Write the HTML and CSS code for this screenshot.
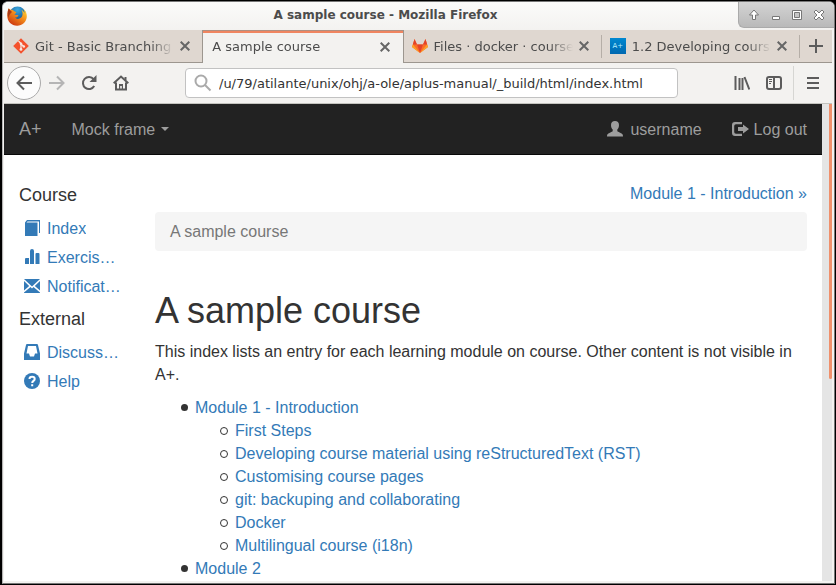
FILE: index.html
```html
<!DOCTYPE html>
<html lang="en">
<head>
<meta charset="utf-8">
<title>A sample course</title>
<link rel="stylesheet" href="styles.css">
</head>
<body>
<div class="window">
  <header class="titlebar">
    <svg class="app-icon" viewBox="0 0 20 20" aria-hidden="true">
      <defs>
        <radialGradient id="globe" cx=".5" cy=".2" r=".8"><stop offset="0" stop-color="#3ba9e0"/><stop offset="1" stop-color="#0a3a78"/></radialGradient>
        <linearGradient id="fox" x1="1" y1="0" x2=".2" y2="1"><stop offset="0" stop-color="#ffe23a"/><stop offset=".4" stop-color="#f8981d"/><stop offset="1" stop-color="#c9300f"/></linearGradient>
      </defs>
      <circle cx="10.500" cy="9" r="8.500" fill="url(#globe)"/>
      <path d="M1.500 2.500C2.500 2.500 3 3.400 3.500 3.800C5 3.500 6.200 4 7 5L9.300 6.200C9 7.400 7.800 7.600 7.300 8.600C8.500 9.400 10 8.600 11.500 9.400C10.700 11 9 11.400 8 11.600C9.500 13.600 13 13.200 14.800 10.800C16 9 15.800 6 14.500 3.800C16.500 5 17.300 6.500 17.500 7.500C17.600 5.500 17 4 16.300 2.800C19 4.800 20 8 19.800 11C19.300 16 15.300 19.700 10.200 19.700C4.500 19.700.300 15.500.300 10C.300 7 .800 4.500 1.500 2.500Z" fill="url(#fox)"/>
      <path d="M1.500 2.500C.500 6 .300 9 1.300 12C2 9 3.500 7 5 6Z" fill="#a83a18"/>
    </svg>
    <span class="window-title">A sample course - Mozilla Firefox</span>
    <div class="window-controls">
      <button type="button" aria-label="Roll up"><svg viewBox="0 0 12 12"><path class="pale" d="M6 1L10.500 6H7.500V10.500H4.500V6H1.500Z"/></svg></button>
      <button type="button" aria-label="Minimize"><svg viewBox="0 0 12 12"><path class="pale" d="M2.500 7.500H9.500V10.500H2.500Z"/></svg></button>
      <button type="button" aria-label="Maximize"><svg viewBox="0 0 12 12"><path class="pale" d="M1.500 1.500H10.500V10.500H1.500ZM3.500 3.500V8.500H8.500V3.500Z" fill-rule="evenodd"/></svg></button>
      <button type="button" aria-label="Close"><svg viewBox="0 0 12 12"><path class="pale" d="M3 1L6 4L9 1L11 3L8 6L11 9L9 11L6 8L3 11L1 9L4 6L1 3Z"/></svg></button>
    </div>
  </header>

  <nav class="tabs" aria-label="Browser tabs">
    <div class="tab">
      <svg class="favicon" viewBox="0 0 16 16" aria-hidden="true"><path d="M8 .200L15.800 8L8 15.800L.200 8Z" fill="#f4512c"/><path d="M5.500 3L8 5.500V11.500M8 6L10.800 8.500" fill="none" stroke="#f7e6e0" stroke-width="1.300"/><circle cx="8" cy="5.700" r="1.300" fill="#f7e6e0"/><circle cx="8" cy="11.400" r="1.400" fill="#f7e6e0"/><circle cx="10.800" cy="8.500" r="1.300" fill="#f7e6e0"/></svg>
      <span class="tab-label">Git - Basic Branching</span>
      <button type="button" class="tab-close" aria-label="Close tab"><svg viewBox="0 0 10 10"><path d="M.700.700L9.300 9.300M9.300.700L.700 9.300"/></svg></button>
    </div>
    <div class="tab active">
      <span class="tab-label">A sample course</span>
      <button type="button" class="tab-close" aria-label="Close tab"><svg viewBox="0 0 10 10"><path d="M.700.700L9.300 9.300M9.300.700L.700 9.300"/></svg></button>
    </div>
    <div class="tab">
      <svg class="favicon" viewBox="0 0 16 16" aria-hidden="true"><path d="M8 15L0 9L2.500 1L5 6.500H11L13.500 1L16 9Z" fill="#fc6d26"/><path d="M8 15L5 6.500H11Z" fill="#e24329"/><path d="M2.500 1L5 6.500H.900ZM13.500 1L11 6.500H15.100Z" fill="#e24329"/><path d="M.900 6.500L8 15L0 9ZM15.100 6.500L8 15L16 9Z" fill="#fca326"/></svg>
      <span class="tab-label">Files · docker · course</span>
      <button type="button" class="tab-close" aria-label="Close tab"><svg viewBox="0 0 10 10"><path d="M.700.700L9.300 9.300M9.300.700L.700 9.300"/></svg></button>
    </div>
    <div class="tab divided">
      <span class="favicon aplus">A+</span>
      <span class="tab-label">1.2 Developing course</span>
      <button type="button" class="tab-close" aria-label="Close tab"><svg viewBox="0 0 10 10"><path d="M.700.700L9.300 9.300M9.300.700L.700 9.300"/></svg></button>
    </div>
    <button type="button" class="new-tab" aria-label="New tab"><svg viewBox="0 0 14 14"><path d="M7 0V14M0 7H14"/></svg></button>
  </nav>

  <div class="toolbar">
    <button type="button" class="back" aria-label="Back"><svg viewBox="0 0 16 16"><path d="M16 8H1.500M8 1.500L1.500 8L8 14.500"/></svg></button>
    <button type="button" class="tool forward" aria-label="Forward"><svg viewBox="0 0 16 16"><path d="M0 8H14.500M8 1.500L14.500 8L8 14.500"/></svg></button>
    <button type="button" class="tool" aria-label="Reload"><svg viewBox="0 0 16 16"><path d="M13.200 11A6 6 0 1 1 12.600 4.200"/><path class="solid" d="M15.500 0V7H8.500Z"/></svg></button>
    <button type="button" class="tool" aria-label="Home"><svg viewBox="0 0 16 16"><path d="M.700 8.300L8 1.500L15.300 8.300M3 7.500V14.500H13V7.500"/><path class="solid" d="M6 14V9H10V14H8.800V11H7.200V14Z"/><path d="M12.500 2V5"/></svg></button>
    <label class="address">
      <svg viewBox="0 0 18 18" aria-hidden="true"><circle cx="7" cy="7" r="5.500"/><path d="M11 11L16.500 16.500"/></svg>
      <input type="text" aria-label="Address" value="/u/79/atilante/unix/ohj/a-ole/aplus-manual/_build/html/index.html">
    </label>
    <div class="toolbar-end">
      <button type="button" class="tool" aria-label="Library"><svg viewBox="0 0 16 16"><path d="M1.500 1V15M5.500 3V15M8.500 3V15M10.500 2L15.300 14.500"/></svg></button>
      <button type="button" class="tool" aria-label="Sidebar"><svg viewBox="0 0 16 16"><rect x="1" y="2" width="14" height="12" rx="2"/><path d="M8 2V14"/><path class="fine" d="M3 4.500H6M3 6.500H6M3 8.500H5"/></svg></button>
    </div>
    <button type="button" class="tool menu" aria-label="Menu"><svg viewBox="0 0 16 16"><path d="M2 3H14M2 8H14M2 13H14"/></svg></button>
  </div>

  <div class="viewport">
    <div class="page">
      <nav class="navbar">
        <a class="brand" href="#">A+</a>
        <a class="frame-menu" href="#">Mock frame <span class="caret"></span></a>
        <a class="user" href="#"><svg viewBox="0 0 16 16"><path d="M8 0C10.500 0 12 1.500 12 4C12 6 11.300 7.600 10.300 8.600V10.300L15 12.700C15.700 13.200 16 13.800 16 15.500H0C0 13.800.300 13.200 1 12.700L5.700 10.300V8.600C4.700 7.600 4 6 4 4C4 1.500 5.500 0 8 0Z"/></svg>username</a>
        <a class="logout" href="#"><svg viewBox="0 0 18 16"><path d="M11 1H4Q1 1 1 4V12Q1 15 4 15H11V12.800H5Q3.200 12.800 3.200 11V5Q3.200 3.200 5 3.200H11Z"/><path d="M12 3.500L18 8L12 12.500V10H7V6H12Z"/></svg>Log out</a>
      </nav>
      <div class="columns">
        <aside>
          <h4>Course</h4>
          <ul>
            <li><a href="#"><svg viewBox="0 0 16 16"><path d="M3 0H16V13H15V1.500H3.500L2.500 2.500H13.500V16H1V2.500Z"/></svg><span>Index</span></a></li>
            <li><a href="#"><svg viewBox="0 0 16 16"><path d="M1 10Q1 9 2 9H5V15H1ZM6 2Q6 0 8 0Q10 0 10 2V15H6ZM11.500 5Q11.500 4 12.500 4H14.500Q15.500 4 15.500 5V15H11.500Z"/></svg><span>Exercise results</span></a></li>
            <li><a href="#"><svg viewBox="0 0 16 16"><path d="M0 1H16L8 8.500ZM0 3L5.200 8L0 12.500ZM16 3L10.800 8L16 12.500ZM6.500 9L8 10.400L9.500 9L16 14.500V15H0V14.500Z"/></svg><span>Notifications</span></a></li>
          </ul>
          <h4>External</h4>
          <ul>
            <li><a href="#"><svg viewBox="0 0 16 16"><path d="M3 0H13Q13.800 0 14 1L16 9.500V16H0V9.500L2 1Q2.200 0 3 0ZM4 2L2.500 9.500H5L6 12.500H10L11 9.500H13.500L12 2Z" fill-rule="evenodd"/></svg><span>Discussion</span></a></li>
            <li><a href="#"><svg viewBox="0 0 16 16"><circle cx="8" cy="8" r="8"/><path class="question" d="M5.500 6C5.500 3 10.700 3 10.700 6C10.700 8 8.200 7.800 8.200 10M8.200 11.200V13.200"/></svg><span>Help</span></a></li>
          </ul>
        </aside>
        <main>
          <div class="pager"><a href="#">Module 1 - Introduction »</a></div>
          <div class="breadcrumb">A sample course</div>
          <h1>A sample course</h1>
          <p>This index lists an entry for each learning module on course. Other content is not visible in A+.</p>
          <ul class="toc">
            <li><a href="#">Module 1 - Introduction</a>
              <ul>
                <li><a href="#">First Steps</a></li>
                <li><a href="#">Developing course material using reStructuredText (RST)</a></li>
                <li><a href="#">Customising course pages</a></li>
                <li><a href="#">git: backuping and collaborating</a></li>
                <li><a href="#">Docker</a></li>
                <li><a href="#">Multilingual course (i18n)</a></li>
              </ul>
            </li>
            <li><a href="#">Module 2</a></li>
          </ul>
        </main>
      </div>
    </div>
    <div class="scrollbar"><div class="thumb"></div></div>
  </div>
</div>
</body>
</html>
```
FILE: styles.css
```css
*, ::before { box-sizing: border-box; }

body {
  margin: 0;
  height: 100vh;
  padding: 1px 1px 1px 2px;
  overflow: hidden;
  background: #000;
  font: 13px "DejaVu Sans", sans-serif;
  color: #4c4c4c;
}

button {
  display: flex;
  align-items: center;
  justify-content: center;
  padding: 0;
  border: 0;
  background: none;
}

a { text-decoration: none; color: #337ab7; }

svg { flex: none; }

.window {
  display: flex;
  flex-direction: column;
  height: 100%;
  border: 1px solid #777;
  border-left-color: #b5b5b5;
  border-radius: 6px 6px 0 0;
  padding: 0 2px 2px 1px;
  overflow: hidden;
  background: #f3f2f0;
}

.titlebar {
  display: flex;
  align-items: flex-start;
  height: 28px;
  flex: none;
  margin: 0 -2px 0 -1px;
  padding-left: 4px;
  background: linear-gradient(#fbfbfa, #f3f2f0);
}

.app-icon { width: 20px; height: 20px; margin-top: 4px; }

.window-title {
  flex: 1;
  padding-left: 6px;
  font-size: 12px;
  line-height: 27px;
  text-align: center;
  font-weight: bold;
}

.window-controls {
  display: flex;
  align-items: center;
  justify-content: space-between;
  width: 96px;
  height: 26px;
  padding: 0 9px;
  border: 1px solid #aaa;
  border-width: 0 0 1px 1px;
  border-bottom-left-radius: 6px;
  background: linear-gradient(#d4d4d4, #b9b9b9);
}

.window-controls svg { width: 12px; height: 12px; }
.pale { fill: #fff; stroke: #777; }

.tabs { display: flex; height: 33px; flex: none; background: #dfd7d0; }

.tab {
  display: flex;
  align-items: center;
  flex: 1;
  min-width: 0;
  gap: 6px;
  padding: 0 13px 0 9px;
  border-bottom: 1px solid #9c968f;
}

.tab + .tab { margin-left: -1px; }

.tab.active {
  border: 1px solid #9c968f;
  border-width: 0 1px;
  background: #f3f2f0;
  box-shadow: inset 0 1px #b08f80, inset 0 3px #f08560;
}

.tab.divided {
  background:
    linear-gradient(#b5aea7, #b5aea7) left center / 1px 23px no-repeat,
    linear-gradient(#b5aea7, #b5aea7) right center / 1px 23px no-repeat;
}

.favicon { width: 16px; height: 16px; flex: none; }

.aplus {
  background: linear-gradient(#0088d0, #0068b0);
  color: #b5efff;
  font-size: 7px;
  line-height: 16px;
  text-align: center;
}

.tab-label {
  flex: 1;
  overflow: hidden;
  white-space: nowrap;
  mask-image: linear-gradient(to left, transparent, #000 24px);
}

.tab-close svg { width: 10px; height: 10px; }
.tab-close path { stroke: #666; stroke-width: 2; }

.new-tab { width: 32px; border-bottom: 1px solid #9c968f; }
.new-tab svg { width: 14px; height: 14px; }
.new-tab path { stroke: #5c5c5c; stroke-width: 2; }

.toolbar {
  display: flex;
  align-items: center;
  gap: 16px;
  height: 41px;
  flex: none;
  padding: 0 11px 0 3px;
  border-bottom: 1px solid #c4c4bf;
}

.toolbar svg { width: 16px; height: 16px; fill: none; stroke: #5c5c5c; stroke-width: 2; }
.toolbar .solid { fill: #5c5c5c; stroke: none; }
.toolbar .fine { stroke-width: 1; }

.back {
  width: 34px;
  height: 34px;
  margin-right: -8px;
  border: 1px solid #aaa;
  border-radius: 50%;
  background: #fcfcfc;
}

.toolbar .forward svg { stroke: #b5b5b5; }

.address {
  display: flex;
  align-items: center;
  gap: 7px;
  flex: 1;
  height: 30px;
  margin: 0 40px 0 40px;
  padding: 0 8px;
  border: 1px solid #c2c2c2;
  border-radius: 4px;
  background: #fff;
}

.toolbar .address svg { width: 18px; height: 18px; stroke: #aaa; }

.address input {
  flex: 1;
  min-width: 0;
  padding: 0;
  border: 0;
  outline: 0;
  background: none;
  color: #333;
  font: inherit;
}

.toolbar-end {
  display: flex;
  align-items: center;
  gap: 16px;
  height: 34px;
  padding-right: 11px;
  border-right: 1px solid #d6d6d3;
}

.menu { margin-left: -5px; }

.viewport { display: flex; flex: 1; min-height: 0; }

.page {
  flex: 1;
  min-width: 0;
  overflow: hidden;
  background: #fff;
  color: #333;
  font: 16px/23px "Liberation Sans", sans-serif;
}

.scrollbar { width: 10px; padding-left: 7px; background: #e5e5e5; }
.thumb { height: 275px; border-radius: 0 0 2px 2px; background: #f0906c; }

.navbar {
  display: flex;
  align-items: center;
  height: 51px;
  padding: 0 15px;
  border-bottom: 1px solid #080808;
  background: #222;
}

.navbar a { display: flex; align-items: center; color: #9d9d9d; }
.navbar .brand { margin-right: 30px; font-size: 18px; }

.caret {
  margin-left: 6px;
  border: 4px solid transparent;
  border-top-color: #9d9d9d;
  border-bottom: 0;
}

.navbar svg { height: 16px; fill: #9d9d9d; }
.user { margin-left: auto; gap: 7px; }
.user svg { width: 16px; }
.logout { margin-left: 29px; gap: 5px; }
.logout svg { width: 18px; }

.columns { display: flex; gap: 34px; padding: 27px 15px 0; }

aside { width: 102px; flex: none; }

h4 { margin: 0 0 8px; font-size: 18px; line-height: 27px; font-weight: normal; }

aside ul { margin: 0 0 2px; padding: 0 0 0 5px; list-style: none; }
aside li { padding-bottom: 6px; }
aside a { display: flex; align-items: center; gap: 7px; }
aside svg { width: 16px; height: 16px; margin-bottom: 2px; fill: #337ab7; }
aside span { overflow: hidden; white-space: nowrap; text-overflow: ellipsis; }
.question { fill: none; stroke: #fff; stroke-width: 2; }

main { flex: 1; min-width: 0; }

.pager { text-align: right; }

.breadcrumb {
  margin: 7px 0 40px;
  padding: 8px 15px;
  border-radius: 4px;
  background: #f5f5f5;
  color: #777;
}

h1 { margin: 0 0 9px; font-size: 36px; line-height: 40px; font-weight: normal; }

p { margin: 0 0 10px; }

.toc, .toc ul { margin: 0; padding-left: 40px; list-style: none; }

.toc li::before {
  content: "";
  display: inline-block;
  width: 7px;
  height: 7px;
  margin: 0 7px 2px -14px;
  border-radius: 50%;
  background: #333;
}

.toc li li::before {
  width: 8px;
  height: 8px;
  margin: 0 7px 1px -15px;
  border: 1px solid #333;
  background: none;
}
```
